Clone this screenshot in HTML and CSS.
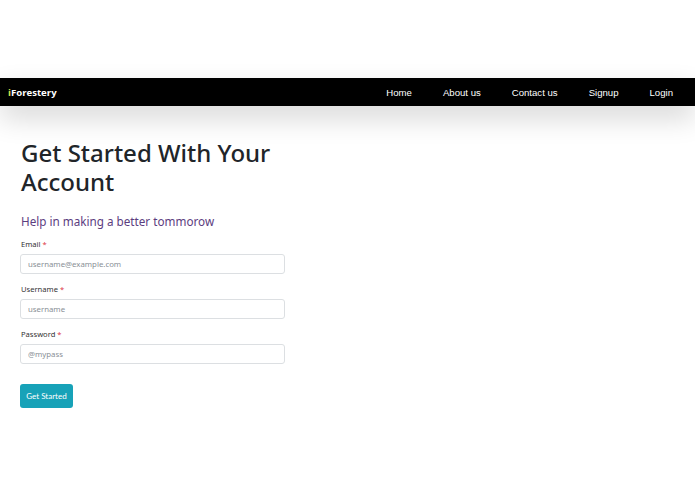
FILE: index.html
```html
<!DOCTYPE html>
<html>
    <head>
        <title>iForestery - Signup</title>
        <meta charset="UTF-8">
        <meta name="viewport" content="width=device-width, initial-scale=1.0">
        <link rel="stylesheet" href="styles.css">
    </head>
    <body>
        <div class="topSpace"></div>
        <div class="navBar">
            <div class="brand"><span class="brandI">i</span>Forestery</div>
            <div class="navLinks">
                <a href="/">Home</a>
                <a href="/about">About us</a>
                <a href="/contact">Contact us</a>
                <a href="/signup">Signup</a>
                <a href="/login">Login</a>
            </div>
        </div>
        <div class="formContainer">
            <h1>Get Started With Your Account</h1>
            <h2>Help in making a better tommorow</h2>
            <label for="email">Email <span class="req">*</span></label>
            <input type="text" id="email" placeholder="username@example.com">
            <label for="username">Username <span class="req">*</span></label>
            <input type="text" id="username" placeholder="username">
            <label for="password">Password <span class="req">*</span></label>
            <input type="password" id="password" placeholder="@mypass">
            <input type="button" value="Get Started">
        </div>
    </body>
</html>
```

FILE: styles.css
```css
body{
    margin: 0;
    background-color: #ffffff;
    font-family: "Noto Sans", "Open Sans", sans-serif;
}

.topSpace{
    height: 78px;
}

.navBar{
    height: 28px;
    background-color: #000000;
    display: flex;
    align-items: center;
    justify-content: space-between;
    padding: 0 22px 0 8px;
    box-shadow: 0 12px 28px rgba(0,0,0,0.16);
    position: relative;
}
.brand{
    color: #ffffff;
    font-family: "Open Sans", sans-serif;
    font-weight: bold;
    font-size: 9.6px;
}
.brandI{
    color: #d8e84a;
}
.navLinks{
    display: flex;
    gap: 31px;
}
.navLinks a{
    color: #ffffff;
    text-decoration: none;
    font-family: "Liberation Sans", Arial, sans-serif;
    font-size: 9.6px;
}

.formContainer{
    width: 265px;
    padding: 32px 0 0 20px;
    display: flex;
    flex-direction: column;
}
h1{
    margin: 0 0 0 1px;
    font-size: 24px;
    font-weight: 500;
    line-height: 29px;
    color: #212529;
}
h2{
    margin: 17px 0 0 1px;
    font-size: 11.7px;
    font-weight: normal;
    color: #5c3d80;
}
label{
    margin: 10px 0 5px 1px;
    font-size: 7.6px;
    color: #333333;
}
.req{
    color: #dc3545;
}
input[type=text], input[type=password]{
    height: 20px;
    margin: 0;
    padding: 0 7px;
    border: 1px solid #dcdfe2;
    border-radius: 3px;
    box-sizing: border-box;
    font-family: "Noto Sans", sans-serif;
    font-size: 7.8px;
    color: #495057;
}
input::placeholder{
    color: #8a9096;
}
input[type=button]{
    align-self: flex-start;
    margin-top: 20px;
    width: 53px;
    height: 24px;
    padding: 0;
    background-color: #17a2b8;
    color: #ffffff;
    border: none;
    border-radius: 3px;
    font-family: Lato, sans-serif;
    font-size: 8px;
    cursor: pointer;
}
```
